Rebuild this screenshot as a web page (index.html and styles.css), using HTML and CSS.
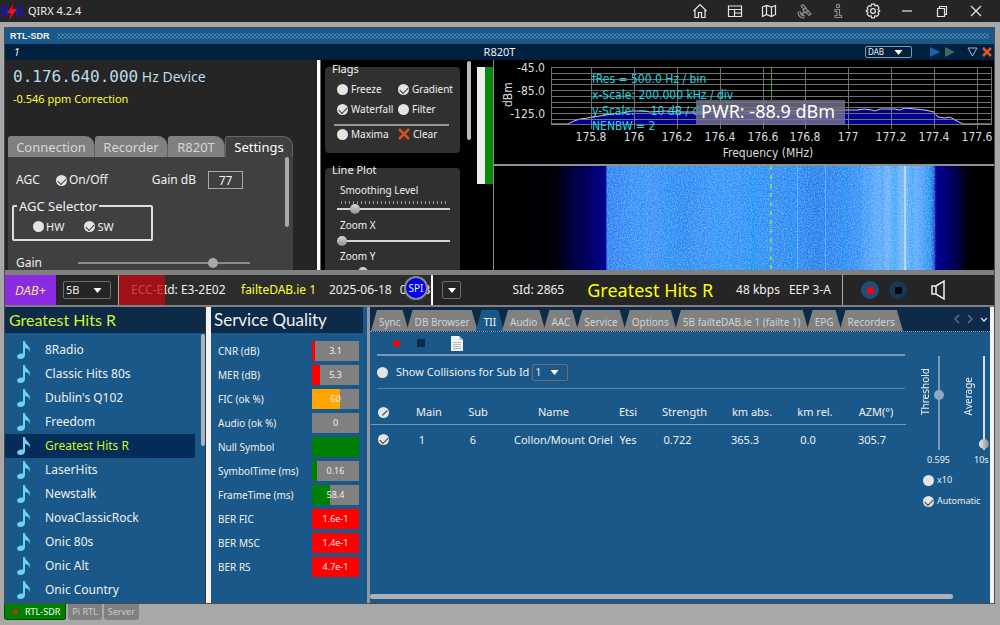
FILE: index.html
```
<!DOCTYPE html>
<html lang="en">
<head>
<meta charset="utf-8">
<title>QIRX 4.2.4</title>
<link rel="stylesheet" href="styles.css">
</head>
<body>
<header class="titlebar">
  <svg class="logo" viewBox="0 0 24 20" width="24" height="20" fill="none"><g stroke="#1a12c8" stroke-width="2"><path d="M4 4Q0 10 4 16M8 5Q4 10 8 15M20 4Q24 10 20 16M16 5Q20 10 16 15"/></g><path d="M14 2L7 12H11L9 19L17 8H12Z" fill="#f01020"/></svg>
  <h1 class="app-name">QIRX 4.2.4</h1>
  <nav class="title-actions">
    <button class="icon-btn" aria-label="Home"><svg viewBox="0 0 16 16" width="16" height="16"><path d="M1.500 8L8 1.500L14.500 8M3 7V14.500H6.500V9.500H9.500V14.500H13V7"/></svg></button>
    <button class="icon-btn" aria-label="Layout"><svg viewBox="0 0 16 16" width="16" height="16"><path d="M1.500 3H14.500V13.500H1.500ZM1.500 6.500H14.500M7.500 6.500V13.500M7.500 10H14.500"/></svg></button>
    <button class="icon-btn" aria-label="Map"><svg viewBox="0 0 16 16" width="16" height="16"><path d="M1.500 4L5.500 2.500L10.500 4L14.500 2.500V11.500L10.500 13.500L5.500 11.500L1.500 13.500ZM5.500 2.500V11.500M10.500 4V13.500"/></svg></button>
    <button class="icon-btn dim" aria-label="Satellite"><svg viewBox="0 0 16 16" width="16" height="16"><path d="M5 3L7 1.500L10 5L8 6.500ZM10 9L12 7.500L15 11L13 12.500ZM7 7L9.500 5L12 8L9.500 10ZM8 9L6.500 10.500M4 8Q4 13 9 13M2 8.500Q2 15 8.500 15M5.500 9.500Q6 11.500 8 11.500"/></svg></button>
    <button class="icon-btn dim" aria-label="Info"><svg viewBox="0 0 16 16" width="16" height="16"><circle cx="8" cy="3" r="1.700"/><path d="M5 6.500H9.500V12.500H11.500V14.500H5V12.500H7V8.500H5Z"/></svg></button>
    <button class="icon-btn" aria-label="Settings"><svg viewBox="0 0 16 16" width="16" height="16"><path d="M6.500 1.200H9.500L10.200 3L12.300 2.300L14 5L13 6.500L14.800 8L13 9.500L13.800 11.300L11.800 13.300L10 12.700L9.300 14.800H6.700L6 12.700L4.200 13.300L2.200 11.300L3 9.500L1.200 8L3 6.500L2.200 4.700L4.200 2.700L6 3.300Z"/><circle cx="8" cy="8" r="2.400"/></svg></button>
    <button class="icon-btn" aria-label="Minimize"><svg viewBox="0 0 16 16" width="16" height="16"><path d="M3 8H13"/></svg></button>
    <button class="icon-btn" aria-label="Restore"><svg viewBox="0 0 16 16" width="16" height="16"><path d="M3.500 5.500H10.500V13.500H3.500ZM5.500 5.500V3.500H12.500V11.500H10.500"/></svg></button>
    <button class="icon-btn" aria-label="Close"><svg viewBox="0 0 16 16" width="16" height="16"><path d="M3 3L13 13M13 3L3 13"/></svg></button>
  </nav>
</header>

<main class="frame">
  <div class="dock-title"><span>RTL-SDR</span><i class="grip"></i></div>
  <div class="device-bar">
    <span class="device-no">1</span>
    <span class="device-name">R820T</span>
    <div class="device-tools">
      <select class="select mode" aria-label="Mode"><option>DAB</option></select>
      <svg viewBox="0 0 66 14" width="66" height="14" fill="none"><path d="M4 2L14 7L4 12Z" fill="#1763ad"/><path d="M19 2L29 7L19 12Z" fill="#3b6a62"/><path d="M42 3H51L46.500 11Z" stroke="#9fb0c6"/><path d="M57 3L65 11M65 3L57 11" stroke="#e2531c" stroke-width="2.500"/></svg>
    </div>
  </div>

  <section class="receiver">
    <div class="tuner">
      <p class="freq"><span class="digits">0.176.640.000</span> Hz Device</p>
      <p class="ppm">-0.546 ppm Correction</p>
      <div class="dev-tabs">
        <button>Connection</button><button>Recorder</button><button>R820T</button><button class="active">Settings</button>
      </div>
      <div class="dev-settings">
        <div class="agc-row">
          <span class="agc-label">AGC</span>
          <label class="check"><input type="checkbox" checked>On/Off</label>
          <label class="gain-db">Gain dB <input type="text" value="77"></label>
        </div>
        <fieldset class="agc-sel">
          <legend>AGC Selector</legend>
          <label class="check"><input type="checkbox">HW</label>
          <label class="check"><input type="checkbox" checked>SW</label>
        </fieldset>
        <label class="gain-row"><span>Gain</span><input class="range gray" type="range" value="80"></label>
        <i class="vbar"></i>
      </div>
    </div>

    <div class="plot-opts">
      <div class="opts-scroll">
        <section class="group">
          <h2>Flags</h2>
          <div class="flags">
            <label class="check"><input type="checkbox">Freeze</label>
            <label class="check"><input type="checkbox" checked>Gradient</label>
            <label class="check"><input type="checkbox" checked>Waterfall</label>
            <label class="check"><input type="checkbox">Filter</label>
            <hr>
            <label class="check"><input type="checkbox">Maxima</label>
            <button class="clear"><svg viewBox="0 0 12 12" width="12" height="12"><path d="M1 1L11 11M11 1L1 11" stroke="#d8501e" stroke-width="2.500"/></svg>Clear</button>
          </div>
        </section>
        <section class="group line-plot">
          <h2>Line Plot</h2>
          <label><span>Smoothing Level</span><i class="ticks"></i><input class="range" type="range" value="13"></label>
          <label><span>Zoom X</span><input class="range" type="range" value="0"></label>
          <label><span>Zoom Y</span><input class="range" type="range" value="20"></label>
        </section>
      </div>
      <i class="opts-bar"></i>
    </div>

    <div class="meter"><i class="m-white"></i><i class="m-green"></i></div>

    <div class="spectrum">
      <svg class="plot" viewBox="494 60 500 104">
        <path d="M551 124L568 124L574 121L580 119L588 118L591 117L600 116L612 114L622 113L632 111L645 111L650 112L665 111L680 112L700 112L720 111L770 111L844 110L858 110L864 109L872 110L875 111L880 109L895 109L900 110L905 108L915 109L925 110L934 112L938 117L945 118L950 117L955 120L963 124L991 124" fill="#00008b" stroke="#c9cce0" stroke-width="1"/>
        <g stroke="#8d8d8d" stroke-width="1" opacity=".8" fill="none"><path d="M551.500 67.500H991.500V124.500H551.500ZM551 73.500H991M551 79.500H991M551 84.500H991M551 90.500H991M551 96.500H991M551 102.500H991M551 107.500H991M551 113.500H991M551 119.500H991"/><path d="M591.500 67V129M634.500 67V129M677.500 67V129M720.500 67V129M763.500 67V129M805.500 67V129M848.500 67V129M891.500 67V129M934.500 67V129M977.500 67V129"/></g>
        <path d="M771.500 67V100" stroke="#5f9a1a"/>
        <g class="axis" text-anchor="end"><text x="545" y="72">-45.0</text><text x="545" y="95">-85.0</text><text x="545" y="118">-125.0</text></g>
        <text class="axis" transform="translate(512 107) rotate(-90)">dBm</text>
        <g class="axis" text-anchor="middle"><text x="591" y="141">175.8</text><text x="634" y="141">176</text><text x="677" y="141">176.2</text><text x="720" y="141">176.4</text><text x="763" y="141">176.6</text><text x="805" y="141">176.8</text><text x="848" y="141">177</text><text x="891" y="141">177.2</text><text x="934" y="141">177.4</text><text x="977" y="141">177.6</text><text x="768" y="157">Frequency (MHz)</text></g>
        <g class="info"><text x="592" y="83">fRes = 500.0 Hz / bin</text><text x="592" y="99">x-Scale: 200.000 kHz / div</text><text x="592" y="115">y-Scale: ~ 10 dB / div</text><text x="592" y="130">NENBW = 2</text></g>
        <rect x="696" y="100" width="149" height="25" fill="#77758c" opacity=".8"/>
        <text class="pwr" x="701" y="118">PWR: -88.9 dBm</text>
      </svg>
      <svg class="fall" viewBox="494 166 500 104" preserveAspectRatio="none">
        <defs>
          <linearGradient id="wf" gradientUnits="userSpaceOnUse" x1="495" y1="0" x2="994" y2="0">
            <stop offset="0" stop-color="#000"/><stop offset=".12" stop-color="#000006"/><stop offset=".15" stop-color="#00003a"/><stop offset=".18" stop-color="#00005c"/><stop offset=".222" stop-color="#00008c"/><stop offset=".224" stop-color="#2a7af0"/><stop offset=".3" stop-color="#3a90fa"/><stop offset=".38" stop-color="#2f83f0"/><stop offset=".45" stop-color="#3c92fc"/><stop offset=".6" stop-color="#2c82f0"/><stop offset=".65" stop-color="#2478e8"/><stop offset=".72" stop-color="#318af8"/><stop offset=".77" stop-color="#66aaff"/><stop offset=".83" stop-color="#74b4ff"/><stop offset=".87" stop-color="#3b92fb"/><stop offset=".878" stop-color="#1d62d8"/><stop offset=".885" stop-color="#000092"/><stop offset=".92" stop-color="#000058"/><stop offset=".94" stop-color="#00001c"/><stop offset=".955" stop-color="#000"/>
          </linearGradient>
          <filter id="grain" x="0" y="0" width="1" height="1"><feTurbulence type="fractalNoise" baseFrequency=".7" numOctaves="2" seed="4"/><feColorMatrix values="0 0 0 0 .55  0 0 0 0 .8  0 0 0 0 1  .9 0 0 0 -.3"/></filter>
          <filter id="streak" x="0" y="0" width="1" height="1"><feTurbulence type="fractalNoise" baseFrequency=".12 .001" numOctaves="2" seed="9"/><feColorMatrix values="0 0 0 0 0  0 0 0 0 .3  0 0 0 0 .85  1.200 0 0 0 -.45"/></filter>
        </defs>
        <rect x="494" y="166" width="500" height="104" fill="url(#wf)"/>
        <rect x="607" y="166" width="328" height="104" filter="url(#streak)"/>
        <rect x="607" y="166" width="328" height="104" filter="url(#grain)"/>
        <path d="M825.500 166V270M797.500 166V270" stroke="#8cc4ff" opacity=".6"/>
        <path d="M905 166V270" stroke="#c4e2ff" stroke-width="2" opacity=".8"/>
        <path d="M771 166V270" stroke="#63e070" stroke-width="2" stroke-dasharray="4 5"/>
      </svg>
    </div>
  </section>

  <section class="status">
    <span class="dab">DAB+</span>
    <select class="select chan" aria-label="Channel"><option>5B</option></select>
    <div class="ensemble"><span class="ecc">ECC-EId: E3-2E02</span><span class="ens">failteDAB.ie 1</span><span>2025-06-18</span><span>09:33</span><b class="spi">SPI</b></div>
    <div class="service">
      <button class="drop" aria-label="Service menu"></button>
      <span class="sid">SId: 2865</span><span class="svc">Greatest Hits R</span><span class="rate">48 kbps</span><span>EEP 3-A</span>
    </div>
    <div class="audio">
      <button class="round" aria-label="Record"><i class="rec"></i></button>
      <button class="round stop" aria-label="Stop"><i></i></button>
      <button class="spk" aria-label="Volume"><svg viewBox="0 0 16 22" width="16" height="22" fill="none" stroke="#eee" stroke-width="1.500"><path d="M2 7H6L14 2V20L6 15H2ZM6 7V15"/></svg></button>
    </div>
  </section>

  <section class="lower">
    <div class="stations">
      <h2>Greatest Hits R</h2>
      <ul>
        <li>8Radio</li><li>Classic Hits 80s</li><li>Dublin's Q102</li><li>Freedom</li><li class="sel">Greatest Hits R</li><li>LaserHits</li><li>Newstalk</li><li>NovaClassicRock</li><li>Onic 80s</li><li>Onic Alt</li><li>Onic Country</li>
      </ul>
      <i class="list-bar"></i>
    </div>

    <div class="quality">
      <h2>Service Quality</h2>
      <dl>
        <dt>CNR (dB)</dt><dd><i class="red" style="width:6%"></i><b>3.1</b></dd>
        <dt>MER (dB)</dt><dd><i class="red" style="width:16%"></i><b>5.3</b></dd>
        <dt>FIC (ok %)</dt><dd><i class="orange" style="width:60%"></i><b>60</b></dd>
        <dt>Audio (ok %)</dt><dd><b>0</b></dd>
        <dt>Null Symbol</dt><dd><i class="green" style="width:100%"></i></dd>
        <dt>SymbolTime (ms)</dt><dd><i class="green" style="width:11%"></i><b>0.16</b></dd>
        <dt>FrameTime (ms)</dt><dd><i class="green" style="width:39%"></i><b>58.4</b></dd>
        <dt>BER FIC</dt><dd><i class="red" style="width:100%"></i><b>1.6e-1</b></dd>
        <dt>BER MSC</dt><dd><i class="red" style="width:100%"></i><b>1.4e-1</b></dd>
        <dt>BER RS</dt><dd><i class="red" style="width:100%"></i><b>4.7e-1</b></dd>
      </dl>
    </div>

    <div class="details">
      <div class="tabs">
        <button>Sync</button><button>DB Browser</button><button class="active">TII</button><button>Audio</button><button>AAC</button><button>Service</button><button>Options</button><button>5B failteDAB.ie 1 (failte 1)</button><button>EPG</button><button>Recorders</button>
        <svg class="arrows" viewBox="0 0 36 10" width="36" height="10" fill="none" stroke="#5d7389" stroke-width="1.300"><path d="M7 1L3 5L7 9M16 1L20 5L16 9"/><path d="M29 4L32 7L35 4" stroke="#dde"/></svg>
      </div>
      <div class="tii">
        <div class="tii-main">
          <div class="tools"><i class="rec"></i><i class="sq"></i><svg viewBox="0 0 12 15" width="12" height="15"><path d="M0 0H8L12 4V15H0Z" fill="#f2f2f2"/><path d="M8 0V4H12" fill="#c4ccd4"/><path d="M2 6.500H10M2 8.500H10M2 10.500H10M2 12.500H10" stroke="#b9bec4"/></svg></div>
          <div class="collide"><label class="check"><input type="checkbox">Show Collisions for Sub Id</label><select class="select sub" aria-label="Sub Id"><option>1</option></select></div>
          <table>
            <colgroup><col class="c-ck"><col class="c-main"><col class="c-sub"><col class="c-name"><col class="c-etsi"><col class="c-str"><col class="c-abs"><col class="c-rel"><col class="c-azm"></colgroup>
            <thead><tr><th class="ck"><input class="slash" type="checkbox" aria-label="All" checked></th><th>Main</th><th>Sub</th><th>Name</th><th>Etsi</th><th>Strength</th><th>km abs.</th><th>km rel.</th><th>AZM(°)</th></tr></thead>
            <tbody><tr><td class="ck"><input type="checkbox" aria-label="Row 1" checked></td><td class="lft">1</td><td class="sub-id">6</td><td class="wide">Collon/Mount Oriel</td><td>Yes</td><td class="lft">0.722</td><td class="lft">365.3</td><td class="lft">0.0</td><td class="az">305.7</td></tr></tbody>
          </table>
        </div>
        <div class="sliders">
          <div class="sl thr"><label for="thr">Threshold</label><input id="thr" class="vrange soft" type="range" value="60"></div>
          <div class="sl avg"><label for="avg">Average</label><input id="avg" class="vrange" type="range" value="1"></div>
          <span class="v-thr">0.595</span><span class="v-avg">10s</span>
          <label class="check opt"><input type="checkbox">x10</label>
          <label class="check opt"><input type="checkbox" checked>Automatic</label>
        </div>
      </div>
      <i class="hbar"></i>
    </div>
  </section>
</main>

<footer class="pages">
  <button class="on"><i></i>RTL-SDR</button><button>Pi RTL</button><button>Server</button>
</footer>
</body>
</html>
```
FILE: styles.css
```
* { box-sizing: border-box; }
body { margin: 0; min-height: 100vh; display: flex; flex-direction: column; background: #a8a8a8; color: #f0f0f0; font: 11px/16px "Noto Sans", "Open Sans", sans-serif; }
h1, h2, p, ul, dl, dd, fieldset { margin: 0; padding: 0; font-weight: normal; }
button, input, select { font: inherit; color: inherit; margin: 0; padding: 0; border: 0; background: none; }
i { display: block; }

.titlebar { display: flex; align-items: center; height: 22px; background: #252525; }
.logo { flex: none; }
.app-name { margin-left: 4px; font-size: 11px; line-height: 20px; }
.title-actions { margin-left: auto; display: flex; justify-content: space-between; width: 292px; margin-right: 16px; }
.icon-btn { width: 16px; height: 16px; display: flex; }
.icon-btn svg { fill: none; stroke: #e6e6e6; stroke-width: 1.2; }
.icon-btn.dim svg { stroke: #8b8b8b; }

.frame { flex: 1; display: flex; flex-direction: column; margin: 5px 5px 0 4px; border: 1px solid #4c4c4c; background: #808080; min-height: 0; }
.dock-title { display: flex; align-items: center; height: 16px; padding: 0 5px; background: #195888; font: bold 9px/16px "Liberation Sans", sans-serif; }
.grip { flex: 1; height: 6px; margin-left: 7px; background-image: radial-gradient(circle, #4a80a8 0 1px, transparent 1px), radial-gradient(circle, #4a80a8 0 1px, transparent 1px); background-size: 4px 4px; background-position: 0 0, 2px 2px; }
.device-bar { display: grid; grid-template-columns: 1fr auto 1fr; align-items: center; height: 16px; padding: 0 2px; background: #00203f; }
.device-no { padding-left: 7px; font-style: italic; font-size: 10px; }
.device-tools { display: flex; justify-content: flex-end; align-items: center; gap: 14px; }
.select { appearance: none; border: 1px solid #6d6d6d; border-radius: 2px; padding-left: 2px; background: no-repeat right 8px center / 9px 5px url("data:image/svg+xml,%3Csvg xmlns='http://www.w3.org/2000/svg' viewBox='0 0 8 5'%3E%3Cpath d='M0 0H8L4 5Z' fill='white'/%3E%3C/svg%3E"); }
.mode { width: 47px; height: 12px; font-size: 8px; line-height: 10px; border-color: #8295a8; }

.receiver { display: grid; grid-template-columns: 312px 3px 151px 22px 1fr; height: 210px; overflow: hidden; background: #000; }
.tuner { position: relative; background: #252525; padding: 6px 0 0 3px; overflow: hidden; }
.freq { padding-left: 5px; font-size: 14px; line-height: 22px; color: #b9dcec; }
.digits { font-family: "DejaVu Sans Mono", monospace; font-size: 16px; }
.ppm { padding-left: 5px; margin-top: 3px; font-size: 11px; color: #ff3; }
.dev-tabs { display: grid; grid-template-columns: 87px 73px 57px 68px; width: 285px; margin-top: 29px; }
.dev-tabs button { height: 21px; border-radius: 3px 10px 0 0; background: #808080; color: #d6d6d6; font-size: 13px; border-right: 1px solid #606060; }
.dev-tabs .active { background: #404040; color: #fff; border: 1px solid #666; border-bottom: 0; }
.dev-settings { position: relative; width: 285px; height: 113px; padding: 14px 8px 0; background: #404040; font-size: 12px; }
.agc-row { display: flex; align-items: center; height: 18px; }
.agc-label { width: 40px; }
.gain-db { margin-left: auto; margin-right: 42px; display: flex; gap: 12px; align-items: center; }
.gain-db input { width: 35px; height: 18px; border: 1px solid #a8a8a8; text-align: center; }
.agc-sel { display: flex; width: 141px; height: 43px; margin: 9px 0 0 -4px; padding: 0 0 0 19px; gap: 20px; align-items: center; border: 2px solid #ddd; border-radius: 2px; font-size: 11px; }
.agc-sel legend { margin-left: -16px; padding: 0 2px; font-size: 13px; line-height: 16px; }
.gain-row { display: flex; align-items: center; margin-top: 14px; gap: 36px; font-size: 12px; }
.gain-row .range { width: 172px; }
.vbar { position: absolute; right: 4px; top: 0; width: 4px; height: 70px; border-radius: 2px; background: #aaa; }

.check { display: inline-flex; align-items: center; gap: 2px; white-space: nowrap; }
input[type=checkbox] { appearance: none; position: relative; flex: none; width: 11px; height: 11px; border-radius: 50%; background: #e4e4e4; }
input[type=checkbox]:checked::after { content: ""; position: absolute; left: 2px; top: 3px; width: 7px; height: 4px; border: solid #333; border-width: 0 0 1px 1px; transform: rotate(-45deg); }
input.slash:checked::after { top: 2px; border-left: 0; }

.range { appearance: none; display: block; height: 9px; }
.range::-webkit-slider-runnable-track { height: 2px; background: #d4d4d4; }
.range::-webkit-slider-thumb { appearance: none; width: 10px; height: 10px; margin-top: -4px; border-radius: 50%; background: linear-gradient(#d8d8d8, #909090); }
.gray::-webkit-slider-runnable-track { background: #8d8d8d; }
.gray::-webkit-slider-thumb { background: #a8a8a8; }

.plot-opts { grid-column: 3; display: flex; justify-content: space-between; overflow: hidden; border-left: 1px solid #666; }
.receiver::before { content: ""; grid-column: 2; grid-row: 1; background: #fff; }
.opts-scroll { width: 139px; padding: 7px 0 0 4px; }
.opts-bar { width: 4px; height: 79px; margin-top: 1px; border-radius: 2px; background: #bbb; }
.group { display: flow-root; height: 86px; margin-bottom: 15px; padding-left: 7px; border-radius: 4px; background: #303030; font-size: 10px; }
.group h2 { margin-top: -4px; font-size: 11px; line-height: 12px; }
.flags { display: grid; grid-template-columns: 61px 1fr; padding: 4px 4px 0 5px; }
.flags .check, .clear { height: 20px; gap: 3px; }
.flags hr { grid-column: 1 / -1; width: 115px; height: 2px; margin: 5px 0 -2px -3px; border: 0; background: #999; }
.clear { display: flex; align-items: center; }
.line-plot { height: 120px; }
.line-plot label { display: block; height: 31px; }
.line-plot span { display: block; padding-left: 8px; line-height: 16px; }
.line-plot .range { width: 113px; margin: 3px 0 0 5px; }
.ticks { width: 105px; height: 3px; margin: 3px 0 0 9px; background: repeating-linear-gradient(90deg, #999 0 1px, transparent 1px 4px); }
.line-plot .ticks + .range { margin-top: 0; }
.line-plot label:first-of-type { height: 35px; margin-top: 6px; }

.meter { grid-column: 4; display: flex; padding: 7px 0 0 6px; }
.meter i { flex: none; width: 8px; height: 117px; background: #eee; }
.meter .m-green { background: #0a8a0a; }
.spectrum { grid-column: 5; display: flex; flex-direction: column; border-left: 1px solid #888; min-width: 0; }
.plot { display: block; width: 100%; height: 106px; border-bottom: 2px solid #909090; flex: none; }
.fall { display: block; width: 100%; flex: 1; min-height: 0; }
.axis { font: 12px "DejaVu Sans Condensed", "Noto Sans", sans-serif; fill: #ddd; }
.info { font: 12px "DejaVu Sans Condensed", "Noto Sans", sans-serif; fill: #1fd7e4; }
.pwr { font: 18px "Noto Sans", sans-serif; fill: #fff; }

.status { display: flex; align-items: stretch; height: 30px; margin: 5px 0 2px; background: #252525; font-size: 12px; line-height: 30px; white-space: nowrap; }
.dab { width: 51px; background: #8a2be2; color: #f7e08a; font-style: italic; font-size: 13px; text-align: center; }
.chan { width: 48px; height: 18px; margin: 6px 7px; font-size: 11px; line-height: 16px; }
.ensemble { position: relative; display: flex; width: 315px; padding-left: 12px; gap: 8px; border-left: 1px solid #aaa; border-right: 2px solid #fff; background: #2c2c2c; overflow: hidden; }
.ensemble::after { content: ""; position: absolute; left: 0; top: 0; width: 46px; height: 30px; background: #c4080c; opacity: .75; }
.ecc { width: 102px; }
.ens { width: 80px; color: #ff3; }
.spi { position: absolute; right: 3px; top: 1px; width: 24px; height: 24px; border: 2px solid #8a8a8a; border-radius: 50%; background: #0000f0; font-size: 10px; font-weight: normal; line-height: 20px; text-align: center; }
.service { flex: 1; display: flex; align-items: center; padding-left: 9px; padding-right: 11px; border-right: 1px solid #aaa; }
.drop { width: 19px; height: 18px; border: 1px solid #6d6d6d; border-radius: 2px; background: no-repeat center / 8px 5px url("data:image/svg+xml,%3Csvg xmlns='http://www.w3.org/2000/svg' viewBox='0 0 8 5'%3E%3Cpath d='M0 0H8L4 5Z' fill='white'/%3E%3C/svg%3E"); }
.sid { margin-left: auto; }
.svc { margin: 0 23px; font-size: 18px; color: #ff0; line-height: 26px; }
.rate { margin-right: 9px; }
.audio { width: 151px; display: flex; align-items: center; padding-left: 18px; gap: 10px; }
.round { display: grid; place-items: center; width: 18px; height: 18px; border-radius: 50%; background: #1a5080; }
.round i { width: 7px; height: 7px; background: #060a10; }
.round .rec { background: #f00; border-radius: 2px; }
.stop { background: #153a58; }
.spk { margin-left: 13px; display: flex; }

.lower { flex: 1; display: grid; grid-template-columns: 201px 157px 1fr; background: #195888; min-height: 0; }
.stations { position: relative; border-right: 1px solid #333; }
.lower h2 { height: 26px; padding-left: 4px; background: #0e2a49; font: 16px/26px Lato, "Noto Sans", sans-serif; }
.stations h2 { color: #d0f52a; }
.stations ul { list-style: none; padding-top: 5px; font-size: 12px; }
.stations li { display: flex; align-items: center; height: 24px; margin-right: 10px; padding-left: 40px; background: no-repeat 11px center / 16px 20px url("data:image/svg+xml,%3Csvg xmlns='http://www.w3.org/2000/svg' viewBox='0 0 16 20'%3E%3Cpath d='M7 1H9C9 5 15 6 14 12C13 9 11 8 9 8V15C9 17.500 7 19 4.500 19S1 18 1.200 16.200S4 13 7 13.600Z' fill='%236ed2f5'/%3E%3C/svg%3E"); }
.stations .sel { color: #d0f52a; background-color: #032c58; }
.list-bar { position: absolute; right: 0; top: 27px; width: 4px; height: 112px; border-radius: 2px; background: #aab4be; }
.quality { border-left: 5px solid #f4f4f4; }
.quality h2 { font-size: 17px; padding-left: 3px; }
.quality dl { display: grid; grid-template-columns: 1fr 47px; row-gap: 4px; padding: 8px 4px 0 7px; font-size: 10px; }
.quality dt { line-height: 20px; }
.quality dd { position: relative; height: 20px; background: #808080; text-align: center; }
.quality dd i { position: absolute; left: 0; top: 0; height: 20px; }
.quality dd b { position: relative; font-weight: normal; font-size: 9px; line-height: 20px; }
.red { background: #f00; }
.orange { background: #ffa500; }
.green { background: #008000; }

.details { display: flex; flex-direction: column; border-left: 3px solid #8e98a2; border-right: 4px solid #f4f4f4; min-width: 0; margin-left: 4px; overflow: hidden; }
.tabs { display: flex; align-items: flex-end; height: 25px; padding-left: 1px; background: #0e2a49; border-bottom: 1px dotted #8aa6bd; }
.tabs button { height: 21px; margin-right: -2px; padding: 3px 8px 0; background: #808080; color: #d2d2d2; font-size: 10px; clip-path: polygon(6px 0, calc(100% - 6px) 0, 100% 100%, 0 100%); white-space: nowrap; }
.tabs .active { background: #195888; color: #fff; }
.arrows { margin: 0 2px 7px auto; flex: none; }
.tii { flex: 1; display: flex; min-height: 0; }
.tii-main { width: 535px; padding-left: 1px; }
.tools { display: flex; align-items: center; gap: 17px; height: 24px; margin-left: 6px; padding-left: 16px; border-bottom: 2px solid #7b99b4; }
.tools .rec { width: 7px; height: 7px; border-radius: 50%; background: #f00; }
.tools .sq { width: 8px; height: 8px; background: #0e2a49; margin-right: 9px; }
.collide { display: flex; align-items: center; gap: 3px; height: 33px; margin-left: 6px; border-bottom: 1px solid #5787aa; font-size: 11px; }
.collide .check { gap: 8px; }
.sub { width: 36px; height: 17px; font-size: 10px; line-height: 15px; }
table { width: 535px; table-layout: fixed; border-collapse: collapse; font-size: 11px; white-space: nowrap; margin-top: 12px; }
th, td { padding: 0; text-align: center; font-weight: normal; height: 23px; }
th { border-bottom: 1px solid #7b99b4; }
td { height: 31px; }
.ck input { display: block; margin: 0 0 0 7px; }
.c-ck { width: 31px; } .c-main { width: 54px; } .c-sub { width: 44px; } .c-name { width: 107px; } .c-etsi { width: 42px; } .c-str { width: 71px; } .c-abs { width: 64px; } .c-rel { width: 62px; } .c-azm { width: 60px; }
.lft { padding-right: 14px; }
.sub-id { padding-right: 10px; }
.az { padding-right: 8px; }
.wide { padding-left: 14px; }
.sliders { flex: 1; display: grid; grid-template-columns: 43px 1fr; grid-template-rows: 94px 20px 20px 22px; padding: 24px 0 0 14px; font-size: 9px; align-items: center; align-content: start; }
.sl { display: flex; align-items: flex-end; justify-content: space-between; height: 94px; }
.sl label { margin-bottom: 35px; writing-mode: vertical-rl; transform: rotate(180deg); font-size: 10px; line-height: 12px; }
.thr { width: 25px; }
.avg { width: 27px; }
.vrange { appearance: none; writing-mode: vertical-lr; direction: rtl; width: 10px; height: 94px; }
.vrange::-webkit-slider-runnable-track { width: 2px; background: #d4dce4; }
.vrange::-webkit-slider-thumb { appearance: none; width: 10px; height: 10px; margin-left: -4px; border-radius: 50%; background: linear-gradient(90deg, #eee, #888); }
.soft::-webkit-slider-runnable-track { background: #7b99b4; }
.soft::-webkit-slider-thumb { background: #8fa9c4; }
.v-thr { padding-left: 8px; }
.v-avg { padding-left: 12px; }
.opt { grid-column: 1 / -1; padding-left: 4px; gap: 3px; }
.hbar { width: 583px; height: 5px; margin: 0 0 4px; border-radius: 2px; background: #b0b0b6; }

.pages { display: flex; gap: 2px; height: 21px; padding-left: 4px; }
.pages button { height: 16px; padding: 0 4px; border-radius: 0 0 3px 3px; background: #808080; color: #ccc; font-size: 9px; line-height: 14px; }
.pages .on { display: flex; align-items: center; gap: 7px; padding: 0 5px 0 8px; background: #008000; color: #fff; border: 1px solid #064a06; border-top: 0; }
.pages .on i { width: 5px; height: 5px; border-radius: 50%; background: #c03020; }
```
